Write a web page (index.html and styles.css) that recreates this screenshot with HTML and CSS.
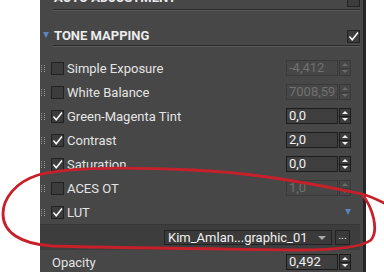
FILE: index.html
```html
<!DOCTYPE html>
<html lang="en">
<head>
    <meta charset="UTF-8">
    <title>Tone Mapping</title>
    <link rel="stylesheet" href="styles.css">
</head>
<body>
    <div class="panel">
        <div class="section-head cut">
            <div class="section-bar">
                <span class="section-title">AUTO ADJUSTMENT</span>
                <span class="check"></span>
            </div>
        </div>

        <div class="section-head">
            <span class="caret"></span>
            <div class="section-bar">
                <span class="section-title">TONE MAPPING</span>
                <span class="check on">
                    <svg viewBox="0 0 13 13"><polyline points="2.5,6.5 5.2,9.8 11,2.5"/></svg>
                </span>
            </div>
        </div>

        <div class="rows">
            <div class="row">
                <span class="grip"></span>
                <span class="check"></span>
                <span class="label">Simple Exposure</span>
                <div class="num disabled"><span class="num-field">-4,412</span><span class="spin"><i class="up"></i><i class="down"></i></span></div>
            </div>
            <div class="row">
                <span class="grip"></span>
                <span class="check"></span>
                <span class="label">White Balance</span>
                <div class="num disabled"><span class="num-field">7008,591</span><span class="spin"><i class="up"></i><i class="down"></i></span></div>
            </div>
            <div class="row">
                <span class="grip"></span>
                <span class="check on"><svg viewBox="0 0 13 13"><polyline points="2.5,6.5 5.2,9.8 11,2.5"/></svg></span>
                <span class="label">Green-Magenta Tint</span>
                <div class="num"><span class="num-field">0,0</span><span class="spin"><i class="up"></i><i class="down"></i></span></div>
            </div>
            <div class="row">
                <span class="grip"></span>
                <span class="check on"><svg viewBox="0 0 13 13"><polyline points="2.5,6.5 5.2,9.8 11,2.5"/></svg></span>
                <span class="label">Contrast</span>
                <div class="num"><span class="num-field">2,0</span><span class="spin"><i class="up"></i><i class="down"></i></span></div>
            </div>
            <div class="row">
                <span class="grip"></span>
                <span class="check on"><svg viewBox="0 0 13 13"><polyline points="2.5,6.5 5.2,9.8 11,2.5"/></svg></span>
                <span class="label">Saturation</span>
                <div class="num"><span class="num-field">0,0</span><span class="spin"><i class="up"></i><i class="down"></i></span></div>
            </div>
            <div class="row">
                <span class="grip"></span>
                <span class="check"></span>
                <span class="label">ACES OT</span>
                <div class="num disabled"><span class="num-field">1,0</span><span class="spin"><i class="up"></i><i class="down"></i></span></div>
            </div>
            <div class="row lut-row">
                <span class="grip"></span>
                <span class="check on"><svg viewBox="0 0 13 13"><polyline points="2.5,6.5 5.2,9.8 11,2.5"/></svg></span>
                <span class="label">LUT</span>
                <span class="lut-caret"></span>
            </div>
        </div>

        <div class="lut-picker">
            <div class="dropdown">
                <span class="dropdown-text">Kim_Amlan...graphic_01</span>
                <span class="dropdown-arrow"></span>
            </div>
            <span class="more-btn">...</span>
        </div>

        <div class="row plain">
            <span class="label">Opacity</span>
            <div class="num"><span class="num-field">0,492</span><span class="spin"><i class="up"></i><i class="down"></i></span></div>
        </div>
    </div>

    <!-- red marker circle drawn over the screenshot -->
    <svg class="scribble" viewBox="0 0 384 272">
        <path d="M384,203 C376,199 369,196 362,194 C310,183 250,172 192,170 C130,167 70,166 38,175 C16,182 3,198 3,214 C3,232 20,244 52,246 C120,248 240,249 300,250 C338,250 362,247 371,240 C379,230 373,208 362,194"/>
    </svg>
</body>
</html>
```

FILE: styles.css
```css
:root {
    --panel-bg: #474747;
    --panel-dark: #3d3d3d;
    --edge: #262626;
    --line-dark: #2c2c2c;
    --line-light: #595959;
    --text: #e4e4e4;
    --text-dim: #707070;
    --field-bg: #3f3f3f;
    --field-border: #1c1c1c;
    --blue: #5985bd;
}

* {
    box-sizing: border-box;
}

body {
    margin: 0;
    width: 384px;
    height: 272px;
    overflow: hidden;
    background: #ffffff;
    font-family: Roboto, "Liberation Sans", sans-serif;
    color: var(--text);
    position: relative;
}

.panel {
    margin-left: 40px;
    width: 326px;
    height: 272px;
    background: var(--panel-bg);
    border-right: 3px solid var(--edge);
    overflow: hidden;
}

/* section headers */
.section-head {
    display: flex;
    align-items: flex-end;
    height: 35px;
    margin-bottom: 1px;
}

.section-head.cut {
    margin-top: -25px;
}

.section-head.cut .section-title {
    margin-top: -5px;
}

.caret {
    width: 0;
    height: 0;
    margin: 0 4px 8px 3px;
    border-left: 3.5px solid transparent;
    border-right: 3.5px solid transparent;
    border-top: 6px solid var(--blue);
}

.section-head.cut .section-bar {
    margin-left: 13px;
}

.section-bar {
    flex: 1;
    display: flex;
    align-items: center;
    justify-content: space-between;
    margin-right: 3px;
    padding-bottom: 2px;
    height: 35px;
    padding-top: 18px;
    border-bottom: 1px solid var(--line-dark);
    box-shadow: 0 1px 0 var(--line-light);
}

.section-title {
    font-size: 13px;
    font-weight: 700;
    line-height: 14px;
    color: #ececec;
    padding-left: 1px;
}

.check {
    width: 13px;
    height: 13px;
    flex: none;
    background: #3c3c3c;
    border: 1px solid #222222;
    display: flex;
}

.check svg {
    width: 13px;
    height: 13px;
    margin: -1px;
    fill: none;
    stroke: #ffffff;
    stroke-width: 1.4;
}

/* parameter rows */
.rows {
    padding-top: 9px;
}

.row {
    display: flex;
    align-items: center;
    height: 24px;
    padding-right: 12px;
}

.row.plain {
    padding-left: 12px;
    height: 24px;
}

.grip {
    position: relative;
    width: 4px;
    height: 7px;
    margin: 0 6px 0 1px;
}

.grip::before {
    content: '';
    position: absolute;
    top: 0;
    left: 0;
    width: 1px;
    height: 1px;
    background: #9a9a9a;
    box-shadow: 3px 0 #9a9a9a, 0 2px #9a9a9a, 3px 2px #9a9a9a,
                0 4px #9a9a9a, 3px 4px #9a9a9a, 0 6px #9a9a9a, 3px 6px #9a9a9a;
}

.label {
    margin-left: 3px;
    font-size: 13px;
    color: var(--text);
    white-space: nowrap;
}

.row.plain .label {
    margin-left: 0;
}

.num {
    margin-left: auto;
    display: flex;
    align-items: stretch;
    gap: 1px;
    height: 16px;
}

.num-field {
    width: 52px;
    background: var(--field-bg);
    border: 1px solid var(--field-border);
    font-size: 13px;
    line-height: 14px;
    padding-left: 2px;
    color: #f0f0f0;
    overflow: hidden;
    white-space: nowrap;
}

.spin {
    width: 12px;
    display: flex;
    flex-direction: column;
}

.spin i {
    flex: 1;
    display: flex;
    align-items: center;
    justify-content: center;
    background: #3c3c3c;
    border: 1px solid var(--field-border);
}

.spin i + i {
    border-top: none;
}

.spin i::before {
    content: '';
    border-left: 3px solid transparent;
    border-right: 3px solid transparent;
}

.spin .up::before {
    border-bottom: 3px solid #f0f0f0;
}

.spin .down::before {
    border-top: 3px solid #f0f0f0;
}

.num.disabled .num-field {
    background: transparent;
    border-color: #3a3a3a;
    color: var(--text-dim);
}

.num.disabled .spin i {
    background: transparent;
    border-color: #3a3a3a;
}

.num.disabled .spin .up::before {
    border-bottom-color: #6a6a6a;
}

.num.disabled .spin .down::before {
    border-top-color: #6a6a6a;
}

.lut-caret {
    margin-left: auto;
    width: 0;
    height: 0;
    border-left: 3.5px solid transparent;
    border-right: 3.5px solid transparent;
    border-top: 6px solid var(--blue);
}

/* LUT file picker */
.lut-picker {
    display: flex;
    align-items: center;
    justify-content: flex-end;
    gap: 3px;
    height: 26px;
    margin-right: 3px;
    padding-right: 10px;
    background: var(--panel-dark);
    border-top: 1px solid #363636;
}

.dropdown {
    width: 168px;
    height: 15px;
    display: flex;
    align-items: center;
    justify-content: space-between;
    padding: 0 5px 0 3px;
    background: #3a3a3a;
    border: 1px solid #222222;
}

.dropdown-text {
    font-size: 13px;
    color: #f0f0f0;
    white-space: nowrap;
}

.dropdown-arrow {
    width: 0;
    height: 0;
    border-left: 4px solid transparent;
    border-right: 4px solid transparent;
    border-top: 4px solid #a8a8a8;
}

.more-btn {
    width: 15px;
    height: 15px;
    background: #3a3a3a;
    border: 1px solid #222222;
    font-size: 11px;
    line-height: 10px;
    text-align: center;
    color: #e0e0e0;
}

.scribble {
    position: absolute;
    top: 0;
    left: 0;
    width: 384px;
    height: 272px;
    pointer-events: none;
}

.scribble path {
    fill: none;
    stroke: #c8202b;
    stroke-width: 2.8;
    stroke-linecap: round;
}
```
